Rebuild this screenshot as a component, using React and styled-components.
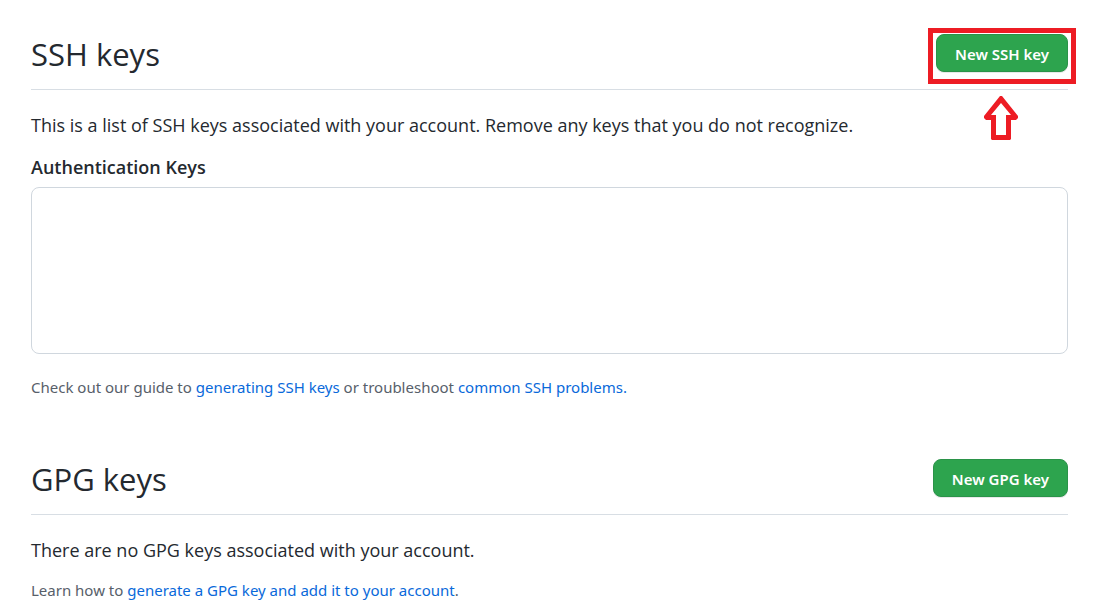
import React from "react";
import styled, { createGlobalStyle } from "styled-components";

const smallTextFont = `"Segoe UI", "Noto Sans", "Open Sans", sans-serif`;

const GlobalStyle = createGlobalStyle`
  *, *::before, *::after { box-sizing: border-box; }
  body {
    margin: 0;
    background: #ffffff;
    color: #24292f;
    font-family: "Segoe UI", "Open Sans", "Noto Sans", sans-serif;
    font-size: 18px;
    line-height: 28px;
  }
`;

const Page = styled.main`
  display: flex;
  flex-direction: column;
  gap: 56px;
  padding: 30px 42px 0 31px;
`;

const Section = styled.section`
  display: flex;
  flex-direction: column;
`;

const SectionHeader = styled.header`
  display: flex;
  align-items: center;
  justify-content: space-between;
  padding-bottom: 13px;
  border-bottom: 1px solid #d8dee4;
`;

const Title = styled.h2`
  margin: 0;
  padding-top: 2px;
  font-size: 31px;
  font-weight: 400;
  line-height: 44px;
`;

const Text = styled.p`
  margin: 21px 0 0;
`;

const Subtitle = styled.h3`
  margin: 14px 0 0;
  font-size: 18px;
  font-weight: 600;
  line-height: 28px;
`;

const KeyPanel = styled.div`
  min-height: 167px;
  margin-top: 6px;
  border: 1px solid #d0d7de;
  border-radius: 8px;
`;

const Hint = styled.p`
  margin: ${({ $gap }) => $gap}px 0 0;
  color: #57606a;
  font-family: ${smallTextFont};
  font-size: 15px;
  line-height: 24px;
`;

const Link = styled.a`
  color: #0969da;
  text-decoration: none;

  &:hover { text-decoration: underline; }
`;

const PrimaryButton = styled.button`
  height: 38px;
  padding: 2px 18px 0;
  border: 1px solid #2b9349;
  border-radius: 8px;
  background: #2da44e;
  box-shadow: 0 1px 0 rgba(27, 31, 36, 0.1);
  color: #ffffff;
  font-family: ${smallTextFont};
  font-size: 15px;
  font-weight: 600;
  line-height: 24px;
  white-space: nowrap;
  cursor: pointer;
`;

const Highlight = styled.div`
  position: relative;
  display: flex;
`;

const HighlightFrame = styled.span`
  position: absolute;
  inset: -6px -8px -12px;
  border: 5px solid #ed1c24;
  pointer-events: none;
`;

const HighlightArrow = styled.svg`
  position: absolute;
  top: 62px;
  left: 50%;
  margin-left: -18px;
  pointer-events: none;
`;

export default function App() {
  return (
    <>
      <GlobalStyle />
      <Page>
        <Section>
          <SectionHeader>
            <Title>SSH keys</Title>
            <Highlight>
              <PrimaryButton type="button">New SSH key</PrimaryButton>
              <HighlightFrame />
              <HighlightArrow width="34" height="44" viewBox="0 0 34 44" aria-hidden="true">
                <path
                  d="M16 0 H18 L34 20 V22 L32 24 H27 V43 L26 44 H8 L7 43 V24 H2 L0 22 V20 Z M17 7 L7 19 H12 V39 H22 V19 H27 Z"
                  fill="#ed1c24"
                  fillRule="evenodd"
                />
              </HighlightArrow>
            </Highlight>
          </SectionHeader>
          <Text>
            This is a list of SSH keys associated with your account. Remove any keys that you do not recognize.
          </Text>
          <Subtitle>Authentication Keys</Subtitle>
          <KeyPanel />
          <Hint $gap={21}>
            Check out our guide to <Link href="#generating-ssh-keys">generating SSH keys</Link> or troubleshoot{" "}
            <Link href="#common-ssh-problems">common SSH problems.</Link>
          </Hint>
        </Section>

        <Section>
          <SectionHeader>
            <Title>GPG keys</Title>
            <PrimaryButton type="button">New GPG key</PrimaryButton>
          </SectionHeader>
          <Text>There are no GPG keys associated with your account.</Text>
          <Hint $gap={14}>
            Learn how to <Link href="#generate-gpg-key">generate a GPG key and add it to your account</Link>.
          </Hint>
        </Section>
      </Page>
    </>
  );
}
